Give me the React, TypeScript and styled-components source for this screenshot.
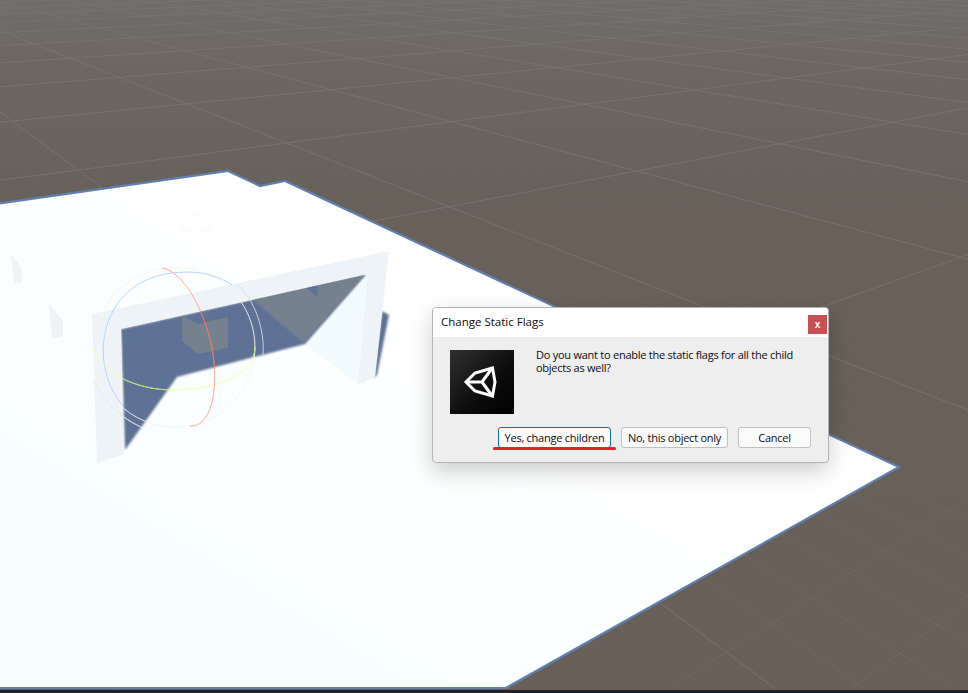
import styled, { createGlobalStyle } from "styled-components";

const GlobalStyle = createGlobalStyle`
    html, body {
        margin: 0;
        padding: 0;
        background: #1f2226;
    }
`;

const Page = styled.div`
    width: 968px;
    height: 693px;
    display: flex;
    flex-direction: column;
    overflow: hidden;
`;

const Viewport = styled.div`
    position: relative;
    height: 690px;
    background: linear-gradient(#716d6a 0, #6b6560 90px, #686059 220px, #675f58 100%);
`;

const BottomStrip = styled.div`
    height: 3px;
    background: #1f2226;
`;

const Scene = styled.svg`
    display: block;
`;

const Dialog = styled.div`
    position: absolute;
    left: 432px;
    top: 307px;
    width: 397px;
    height: 156px;
    box-sizing: border-box;
    display: flex;
    flex-direction: column;
    background: #eeeeee;
    border: 1px solid #b4b4b4;
    border-radius: 4px;
    box-shadow: 0 8px 22px rgba(0, 0, 0, 0.2);
    font-family: "Open Sans", "Noto Sans", sans-serif;
    font-size: 11px;
    letter-spacing: -0.25px;
    color: #0c0c0c;
`;

const TitleBar = styled.div`
    height: 29px;
    display: flex;
    align-items: center;
    justify-content: space-between;
    padding: 0 1px 0 8px;
    background: #ffffff;
    border-radius: 3px 3px 0 0;
`;

const Title = styled.span`
    font-size: 11.5px;
    letter-spacing: 0;
    margin-bottom: 2px;
`;

const CloseButton = styled.div`
    width: 19px;
    height: 19px;
    margin-top: 3px;
    display: flex;
    align-items: center;
    justify-content: center;
    background: #c75050;
    color: #ffffff;
    font-family: "Liberation Sans", sans-serif;
    font-size: 10px;
    font-weight: 700;
`;

const Body = styled.div`
    display: flex;
    gap: 22px;
    padding: 13px 17px 0;
`;

const Logo = styled.svg`
    display: block;
    flex: none;
`;

const Message = styled.p`
    margin: -2px 0 0;
    width: 270px;
    line-height: 13px;
`;

const Buttons = styled.div`
    display: flex;
    justify-content: flex-end;
    gap: 10px;
    margin-top: 13px;
    padding-right: 17px;
`;

const DialogButton = styled.div<{ $width: number; $focused?: boolean }>`
    width: ${(p) => p.$width}px;
    height: 21px;
    box-sizing: border-box;
    display: flex;
    align-items: center;
    justify-content: center;
    background: #fbfbfb;
    border: 1px solid ${(p) => (p.$focused ? "#0a6cc4" : "#c0c0c0")};
    border-radius: 3px;
    white-space: nowrap;
`;

// red marker stroke someone drew over the screenshot
const Underline = styled.div`
    position: absolute;
    left: 60px;
    top: 139px;
    width: 123px;
    height: 3px;
    background: #ee1c25;
    border-radius: 2px;
`;

const HORIZON = -60;
const VP_A = 1850;
const VP_B = -231;
const W = 968;
const H = 690;

// y where a line from the vanishing point through (x300, 300) crosses x
function lineTo(vp: number, x300: number) {
    const yAt = (x: number) => HORIZON + (360 * (x - vp)) / (x300 - vp);
    return { x1: 0, y1: yAt(0), x2: W, y2: yAt(W) };
}

function range(from: number, to: number, step: number) {
    const out: number[] = [];
    for (let i = from; i <= to + 1e-6; i += step) out.push(i);
    return out;
}

const majorLines = [
    ...range(-1, 14, 1).map((k) => lineTo(VP_A, 841 - 882 * k)),
    ...range(-1, 16, 1).map((m) => lineTo(VP_B, 687 + 434 * m)),
];

const minorLines = [
    ...range(-1, 6, 0.1).map((k) => lineTo(VP_A, 841 - 882 * k)),
    ...range(-1, 8, 0.1).map((m) => lineTo(VP_B, 687 + 434 * m)),
];

const SHADOW = "#5d7294";
const FRAME = "#edf3f7";
const GREY = "#75818f";
const SHADOW_POINTS = "121,329 366,274 305,344 177,377 125,450";

const RED_ARC = "M162 268 C190 272 220 340 214 390 C212 415 200 428 190 426";
const BLUE_ARC = "M127 410 C85 370 95 272 187 272 C205 272 220 277 232 285";
const GREEN_ARC = "M94 348 C100 372 135 390 173 390 C215 390 255 375 255 347";
const GREY_ARC = "M93 380 C105 405 125 420 143 428";

function SceneView() {
    return (
        <Scene width={W} height={H} viewBox={`0 0 ${W} ${H}`}>
            <defs>
                <linearGradient id="minor" gradientUnits="userSpaceOnUse" x1="0" y1="260" x2="0" y2="660">
                    <stop offset="0" stopColor="#7a7570" stopOpacity="0.02" />
                    <stop offset="1" stopColor="#7a7570" stopOpacity="0.38" />
                </linearGradient>
                <linearGradient id="floor" gradientUnits="userSpaceOnUse" x1="520" y1="380" x2="330" y2="690">
                    <stop offset="0" stopColor="#ffffff" />
                    <stop offset="1" stopColor="#f8fefe" />
                </linearGradient>
                <filter id="soft" x="-10%" y="-10%" width="120%" height="120%">
                    <feGaussianBlur stdDeviation="1" />
                </filter>
                <clipPath id="inShadow">
                    <polygon points={SHADOW_POINTS} />
                </clipPath>
            </defs>

            {minorLines.map((l, i) => (
                <line key={i} {...l} stroke="url(#minor)" strokeWidth="1" />
            ))}
            {majorLines.map((l, i) => (
                <line key={i} {...l} stroke="#78746f" strokeWidth="0.9" />
            ))}

            <polygon
                points="-5,204 228,171 260,186 285,181 899,467 506,688 -5,688"
                fill="url(#floor)"
                stroke="#5f7fae"
                strokeWidth="2.2"
            />

            {/* light gizmo */}
            <path
                d="M188 232 C178 230 181 219 189 220 C191 212 203 212 204 220 C213 220 212 232 204 232 Z"
                fill="none"
                stroke="#f8f8f8"
                strokeWidth="1"
            />

            {/* small pieces on the left */}
            <polygon points="11,255 21,267 22,282 14,283" fill={FRAME} />
            <polygon points="49,304 63,321 63,336 52,338" fill={FRAME} />

            {/* shadows */}
            <polygon points="382,311 389,315 377,375 374,378" fill={SHADOW} filter="url(#soft)" />
            <polygon points="368,274 305,344 358,384 366,384" fill="#f2fcff" />
            <polygon points={SHADOW_POINTS} fill={SHADOW} filter="url(#soft)" />
            <polygon points="252,299 366,274 304,343" fill={GREY} filter="url(#soft)" />
            <polygon points="305,287 318,285 317,297" fill={SHADOW} />

            {/* arch */}
            <polygon
                points="92,314 389,251 375,377 358,384 368,274 121,329 124,454 97,463"
                fill={FRAME}
            />

            {/* box seen through the arch */}
            <polygon points="182,316 198,324 228,317 228,348 198,354 182,341" fill={GREY} />

            {/* rotate gizmo */}
            <g fill="none" strokeWidth="0.9">
                <circle cx="175" cy="347" r="80" stroke="#f3f4f4" />
                <path d={BLUE_ARC} stroke="#a8d0ff" />
                <path d="M237 284 C255 300 265 330 263 355" stroke="#d5dbe2" />
                <path d={GREY_ARC} stroke="#e4e6ea" />
                <path d={GREEN_ARC} stroke="#f0ffa6" />
                <path d={RED_ARC} stroke="#ff9e85" />
                <g clipPath="url(#inShadow)">
                    <path d={BLUE_ARC} stroke="#4f78d8" />
                    <path d={GREY_ARC} stroke="#cfd5de" />
                    <path d={GREEN_ARC} stroke="#a8e070" />
                    <path d={RED_ARC} stroke="#e0705c" />
                </g>
            </g>
        </Scene>
    );
}

function UnityLogo() {
    return (
        <Logo width="64" height="64" viewBox="0 0 64 64">
            <defs>
                <linearGradient id="tile" x1="0" y1="0" x2="1" y2="1">
                    <stop offset="0" stopColor="#303030" />
                    <stop offset="0.6" stopColor="#0c0c0c" />
                    <stop offset="1" stopColor="#000000" />
                </linearGradient>
            </defs>
            <rect width="64" height="64" fill="url(#tile)" />
            <g fill="none" stroke="#ffffff" strokeWidth="3" strokeLinejoin="miter">
                <path d="M16 32 L25 23 L42.5 18 L45 32 L42.5 46 L25 41 Z" />
                <path d="M16 32 H32 L41.5 19 M32 32 L41.5 45" />
            </g>
        </Logo>
    );
}

export default function App() {
    return (
        <Page>
            <GlobalStyle />
            <Viewport>
                <SceneView />
                <Dialog>
                    <TitleBar>
                        <Title>Change Static Flags</Title>
                        <CloseButton>x</CloseButton>
                    </TitleBar>
                    <Body>
                        <UnityLogo />
                        <Message>
                            Do you want to enable the static flags for all the child objects as well?
                        </Message>
                    </Body>
                    <Buttons>
                        <DialogButton $width={113} $focused>
                            Yes, change children
                        </DialogButton>
                        <DialogButton $width={107}>No, this object only</DialogButton>
                        <DialogButton $width={73}>Cancel</DialogButton>
                    </Buttons>
                    <Underline />
                </Dialog>
            </Viewport>
            <BottomStrip />
        </Page>
    );
}
